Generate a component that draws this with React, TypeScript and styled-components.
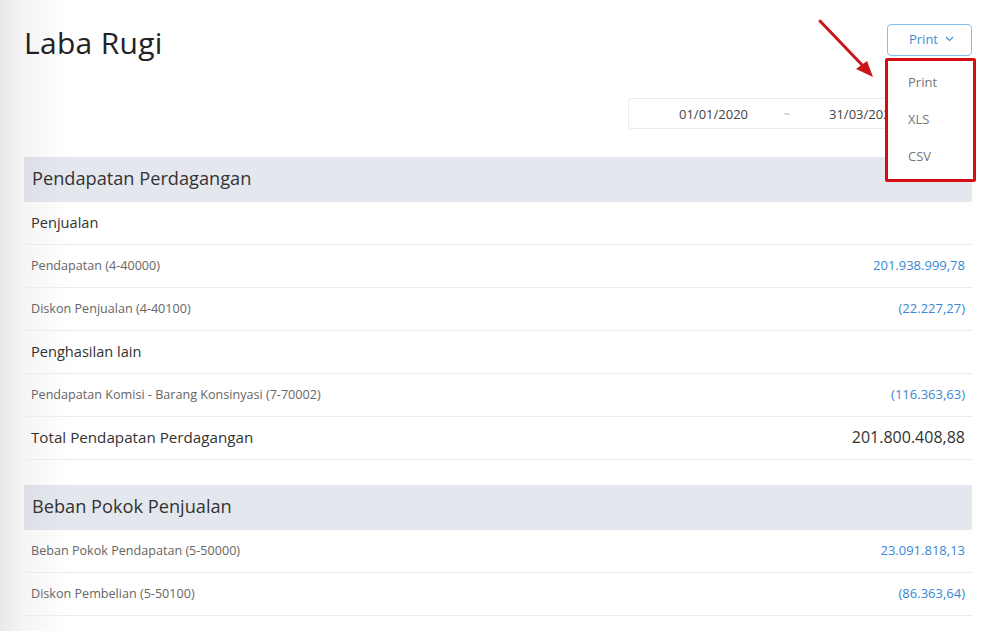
import React from "react";
import styled, { createGlobalStyle } from "styled-components";

const Global = createGlobalStyle`
  html, body { margin: 0; padding: 0; }
  body {
    font-family: "Open Sans", "Liberation Sans", sans-serif;
    background: #fff;
    color: #333;
  }
`;

const Page = styled.div`
  position: relative;
  width: 1000px;
  height: 631px;
  overflow: hidden;
  box-sizing: border-box;
  padding: 0 28px 0 24px;
  background: linear-gradient(90deg, #e9e9ea 0px, #f5f5f5 25px, #ffffff 70px);
`;

const TopBar = styled.div`
  display: flex;
  justify-content: space-between;
  align-items: flex-start;
  padding-top: 24px;
  height: 74px;
  box-sizing: border-box;
`;

const Title = styled.h1`
  margin: 0;
  font-weight: 400;
  font-size: 30px;
  line-height: 38px;
  color: #222;
  letter-spacing: 0.3px;
`;

const PrintButton = styled.button`
  display: flex;
  align-items: center;
  justify-content: center;
  gap: 7px;
  width: 85px;
  height: 32px;
  border: 1px solid #86bde6;
  border-radius: 4px;
  background: #fff;
  color: #3d8fcf;
  font-family: inherit;
  font-size: 13px;
  padding: 0 0 3px 4px;
`;

const DateRow = styled.div`
  display: flex;
  justify-content: flex-end;
  height: 83px;
  box-sizing: border-box;
  padding-top: 24px;
`;

const DateBox = styled.div`
  display: flex;
  align-items: center;
  width: 344px;
  height: 31px;
  box-sizing: border-box;
  padding-left: 50px;
  border: 1px solid #ebebeb;
  border-radius: 3px;
  font-size: 13px;
  color: #444;
  white-space: nowrap;
`;

const DateText = styled.span<{ $w: number }>`
  width: ${(p) => p.$w}px;
`;

const Tilde = styled.span`
  width: 16px;
  margin-right: 34px;
  text-align: center;
  color: #aaa;
  font-size: 11px;
`;

const Section = styled.div`
  margin-bottom: 25px;
`;

const SectionHead = styled.div`
  height: 45px;
  display: flex;
  align-items: center;
  padding: 0 8px 3px;
  box-sizing: border-box;
  font-size: 18.2px;
  color: #333;
  background: linear-gradient(90deg, #dcdfe5 0px, #e4e7ee 40px, #e4e7ee 100%);
`;

const Row = styled.div`
  height: 43px;
  display: flex;
  align-items: center;
  justify-content: space-between;
  padding: 0 7px 2px 7px;
  border-bottom: 1px solid #ececec;
  box-sizing: border-box;
`;

const Label = styled.span<{ $kind: "sub" | "item" | "total" }>`
  font-size: ${(p) => (p.$kind === "item" ? "12.6px" : p.$kind === "total" ? "15.2px" : "14.6px")};
  color: ${(p) => (p.$kind === "item" ? "#666" : "#333")};
`;

const Value = styled.span<{ $total?: boolean }>`
  font-size: ${(p) => (p.$total ? "16px" : "13px")};
  color: ${(p) => (p.$total ? "#333" : "#3a87d3")};
`;

const Dropdown = styled.div`
  position: absolute;
  left: 885px;
  top: 58px;
  width: 91px;
  height: 124px;
  box-sizing: border-box;
  border: 3px solid #d40d12;
  border-radius: 2px;
  background: #fff;
  padding-top: 2px;
`;

const MenuItem = styled.div`
  height: 37px;
  display: flex;
  align-items: center;
  padding-left: 20px;
  font-size: 13px;
  color: #777;
`;

const Arrow = styled.svg`
  position: absolute;
  left: 815px;
  top: 16px;
`;

type Line = { kind: "sub" | "item" | "total"; label: string; value?: string };

const sections: { title: string; lines: Line[] }[] = [
  {
    title: "Pendapatan Perdagangan",
    lines: [
      { kind: "sub", label: "Penjualan" },
      { kind: "item", label: "Pendapatan (4-40000)", value: "201.938.999,78" },
      { kind: "item", label: "Diskon Penjualan (4-40100)", value: "(22.227,27)" },
      { kind: "sub", label: "Penghasilan lain" },
      { kind: "item", label: "Pendapatan Komisi - Barang Konsinyasi (7-70002)", value: "(116.363,63)" },
      { kind: "total", label: "Total Pendapatan Perdagangan", value: "201.800.408,88" },
    ],
  },
  {
    title: "Beban Pokok Penjualan",
    lines: [
      { kind: "item", label: "Beban Pokok Pendapatan (5-50000)", value: "23.091.818,13" },
      { kind: "item", label: "Diskon Pembelian (5-50100)", value: "(86.363,64)" },
    ],
  },
];

export default function App() {
  return (
    <Page>
      <Global />
      <TopBar>
        <Title>Laba Rugi</Title>
        <PrintButton>
          Print
          <svg width="9" height="6" viewBox="0 0 9 6">
            <path d="M1 1l3.5 3.5L8 1" fill="none" stroke="#3d8fcf" strokeWidth="1.1" />
          </svg>
        </PrintButton>
      </TopBar>
      <DateRow>
        <DateBox>
          <DateText $w={100}>01/01/2020</DateText>
          <Tilde>~</Tilde>
          <DateText $w={120}>31/03/2020</DateText>
        </DateBox>
      </DateRow>
      {sections.map((s) => (
        <Section key={s.title}>
          <SectionHead>{s.title}</SectionHead>
          {s.lines.map((l) => (
            <Row key={l.label}>
              <Label $kind={l.kind}>{l.label}</Label>
              {l.value && <Value $total={l.kind === "total"}>{l.value}</Value>}
            </Row>
          ))}
        </Section>
      ))}
      <Dropdown>
        <MenuItem>Print</MenuItem>
        <MenuItem>XLS</MenuItem>
        <MenuItem>CSV</MenuItem>
      </Dropdown>
      <Arrow width="70" height="70" viewBox="0 0 70 70">
        <line x1="5" y1="5" x2="50" y2="52" stroke="#c8161b" strokeWidth="3" strokeLinecap="round" />
        <polygon points="58,61 41,53 52,45" fill="#c8161b" />
      </Arrow>
    </Page>
  );
}
